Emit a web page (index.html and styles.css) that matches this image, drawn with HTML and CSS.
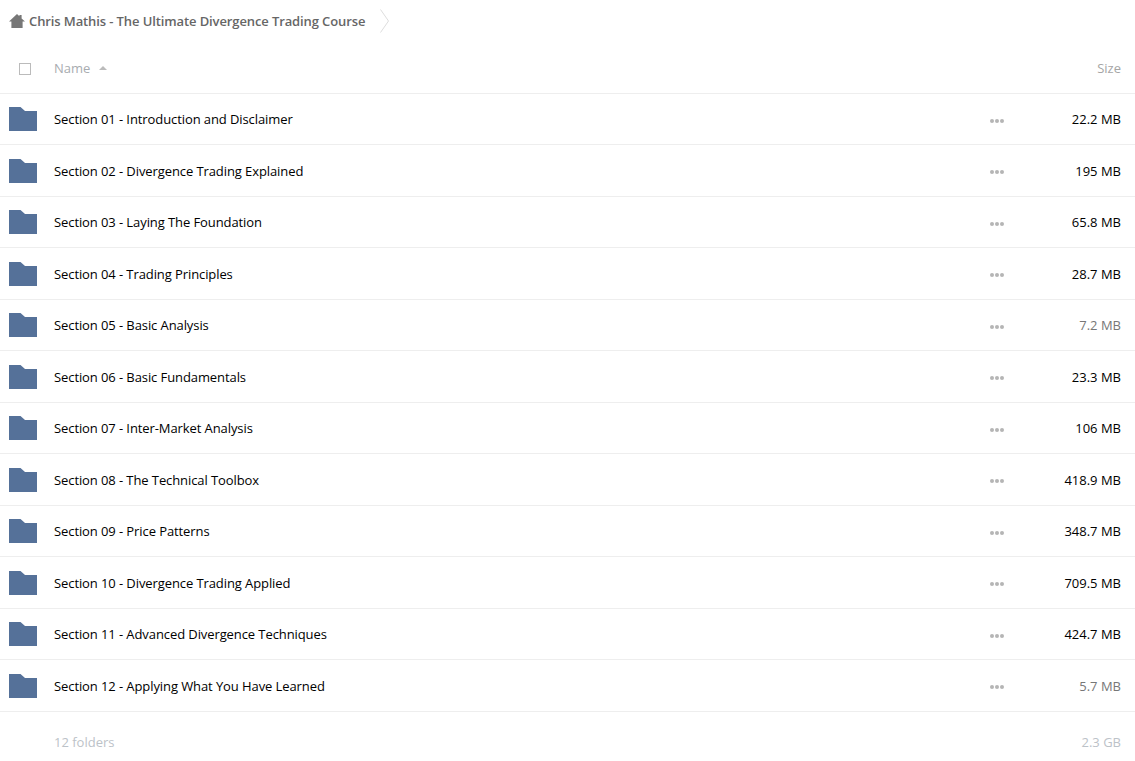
FILE: index.html
```html
<!DOCTYPE html>
<html lang="en">
<head>
<meta charset="utf-8">
<title>Chris Mathis - The Ultimate Divergence Trading Course</title>
<link rel="stylesheet" href="styles.css">
</head>
<body>
<nav class="crumbs">
  <svg class="home" width="16" height="14" viewBox="0 0 16 14"><path d="M8 0 L10.4 2.3 V1 H12.6 V4.4 L16 7.6 H13.6 V14 H2.4 V7.6 H0 Z" fill="#777"/></svg>
  <span class="crumb-title">Chris Mathis - The Ultimate Divergence Trading Course</span>
  <svg class="chev" width="10" height="24" viewBox="0 0 10 24"><path d="M0.5 0.5 L8.5 12 L0.5 23.5" fill="none" stroke="#ddd"/></svg>
</nav>
<header class="head">
  <span class="check"></span>
  <span class="head-name">Name</span>
  <span class="sort"></span>
  <span class="head-size">Size</span>
</header>
<main class="list">
  <div class="row"><svg class="folder" viewBox="0 0 28 24"><path d="M0 0 H11.5 L16 4 H28 V24 H0 Z"/></svg><span class="name">Section 01 - Introduction and Disclaimer</span><span class="dots"><i></i><i></i><i></i></span><span class="size">22.2 MB</span></div>
  <div class="row"><svg class="folder" viewBox="0 0 28 24"><path d="M0 0 H11.5 L16 4 H28 V24 H0 Z"/></svg><span class="name">Section 02 - Divergence Trading Explained</span><span class="dots"><i></i><i></i><i></i></span><span class="size">195 MB</span></div>
  <div class="row"><svg class="folder" viewBox="0 0 28 24"><path d="M0 0 H11.5 L16 4 H28 V24 H0 Z"/></svg><span class="name">Section 03 - Laying The Foundation</span><span class="dots"><i></i><i></i><i></i></span><span class="size">65.8 MB</span></div>
  <div class="row"><svg class="folder" viewBox="0 0 28 24"><path d="M0 0 H11.5 L16 4 H28 V24 H0 Z"/></svg><span class="name">Section 04 - Trading Principles</span><span class="dots"><i></i><i></i><i></i></span><span class="size">28.7 MB</span></div>
  <div class="row"><svg class="folder" viewBox="0 0 28 24"><path d="M0 0 H11.5 L16 4 H28 V24 H0 Z"/></svg><span class="name">Section 05 - Basic Analysis</span><span class="dots"><i></i><i></i><i></i></span><span class="size small">7.2 MB</span></div>
  <div class="row"><svg class="folder" viewBox="0 0 28 24"><path d="M0 0 H11.5 L16 4 H28 V24 H0 Z"/></svg><span class="name">Section 06 - Basic Fundamentals</span><span class="dots"><i></i><i></i><i></i></span><span class="size">23.3 MB</span></div>
  <div class="row"><svg class="folder" viewBox="0 0 28 24"><path d="M0 0 H11.5 L16 4 H28 V24 H0 Z"/></svg><span class="name">Section 07 - Inter-Market Analysis</span><span class="dots"><i></i><i></i><i></i></span><span class="size">106 MB</span></div>
  <div class="row"><svg class="folder" viewBox="0 0 28 24"><path d="M0 0 H11.5 L16 4 H28 V24 H0 Z"/></svg><span class="name">Section 08 - The Technical Toolbox</span><span class="dots"><i></i><i></i><i></i></span><span class="size">418.9 MB</span></div>
  <div class="row"><svg class="folder" viewBox="0 0 28 24"><path d="M0 0 H11.5 L16 4 H28 V24 H0 Z"/></svg><span class="name">Section 09 - Price Patterns</span><span class="dots"><i></i><i></i><i></i></span><span class="size">348.7 MB</span></div>
  <div class="row"><svg class="folder" viewBox="0 0 28 24"><path d="M0 0 H11.5 L16 4 H28 V24 H0 Z"/></svg><span class="name">Section 10 - Divergence Trading Applied</span><span class="dots"><i></i><i></i><i></i></span><span class="size">709.5 MB</span></div>
  <div class="row"><svg class="folder" viewBox="0 0 28 24"><path d="M0 0 H11.5 L16 4 H28 V24 H0 Z"/></svg><span class="name">Section 11 - Advanced Divergence Techniques</span><span class="dots"><i></i><i></i><i></i></span><span class="size">424.7 MB</span></div>
  <div class="row"><svg class="folder" viewBox="0 0 28 24"><path d="M0 0 H11.5 L16 4 H28 V24 H0 Z"/></svg><span class="name">Section 12 - Applying What You Have Learned</span><span class="dots"><i></i><i></i><i></i></span><span class="size small">5.7 MB</span></div>
</main>
<footer class="foot">
  <span>12 folders</span>
  <span>2.3 GB</span>
</footer>
</body>
</html>
```
FILE: styles.css
```css
* { box-sizing: border-box; }
html, body { margin: 0; padding: 0; background: #fff; }
body {
  font-family: "Open Sans", sans-serif;
  font-size: 13px;
  color: #000;
  overflow: hidden;
  height: 761px;
}
.crumbs {
  display: flex;
  align-items: center;
  height: 44px;
  padding: 0 0 2px 9px;
}
.home { flex: none; margin-right: 4px; }
.crumb-title { font-weight: 600; color: #666; letter-spacing: -0.11px; }
.chev { margin-left: 15px; flex: none; }
.head {
  display: flex;
  align-items: center;
  height: 49.5px;
  padding: 0 14px 1px 19px;
  border-bottom: 1px solid #eee;
  color: #a5a5a5;
}
.check {
  width: 12px;
  height: 12px;
  border: 1px solid #bbb;
  margin: 2px 23px 0 0;
  flex: none;
}
.head-name { color: #a8acb0; }
.sort {
  width: 0;
  height: 0;
  border-left: 4px solid transparent;
  border-right: 4px solid transparent;
  border-bottom: 4px solid #bbb;
  margin-left: 9px;
}
.head-size { margin-left: auto; }
.row {
  display: flex;
  align-items: center;
  height: 51.5px;
  padding: 1px 14px 0 9px;
  border-bottom: 1px solid #eee;
}
.folder {
  width: 28px;
  height: 24px;
  fill: #557199;
  flex: none;
  margin-right: 17px;
}
.name { flex: 1; letter-spacing: -0.09px; }
.dots {
  display: flex;
  gap: 1px;
  width: 57px;
  margin-right: 17px;
  padding-top: 3px;
}
.dots i {
  display: block;
  width: 4px;
  height: 4px;
  border-radius: 50%;
  background: #b5b5b5;
}
.size { flex: none; text-align: right; margin-left: -3px; width: 60px; }
.size.small { color: #777; }
.foot {
  display: flex;
  justify-content: space-between;
  padding: 21px 14px 0 54px;
  color: #bcc2c8;
}
```
